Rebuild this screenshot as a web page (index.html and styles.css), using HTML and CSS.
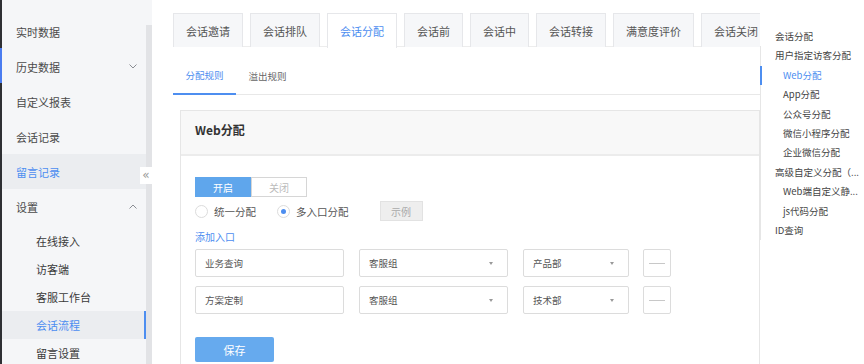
FILE: index.html
```html
<!DOCTYPE html>
<html lang="zh-CN">
<head>
  <meta charset="UTF-8">
  <meta name="viewport" content="width=device-width, initial-scale=1.0">
  <title>会话分配</title>
  <link rel="stylesheet" href="styles.css">
</head>
<body>
  <div class="layout">
    <div class="edge"><span class="edge-mark"></span></div>

    <aside class="sidebar">
      <ul class="menu">
        <li class="menu-item">实时数据</li>
        <li class="menu-item">历史数据
          <svg class="chev" width="8" height="5" viewBox="0 0 8 5"><polyline points="0.5,0.5 4,4 7.5,0.5" fill="none" stroke="#8a8d93" stroke-width="1"/></svg>
        </li>
        <li class="menu-item">自定义报表</li>
        <li class="menu-item">会话记录</li>
        <li class="menu-item active">留言记录</li>
        <li class="menu-item">设置
          <svg class="chev" width="8" height="5" viewBox="0 0 8 5"><polyline points="0.5,4.5 4,1 7.5,4.5" fill="none" stroke="#8a8d93" stroke-width="1"/></svg>
        </li>
        <li class="submenu">
          <ul>
            <li class="sub-item">在线接入</li>
            <li class="sub-item">访客端</li>
            <li class="sub-item">客服工作台</li>
            <li class="sub-item current">会话流程</li>
            <li class="sub-item">留言设置</li>
          </ul>
        </li>
      </ul>
      <div class="scroll"><div class="thumb"></div></div>
      <button class="collapse">«</button>
    </aside>

    <main class="main">
      <div class="content">
        <div class="tabs">
          <div class="tab">会话邀请</div>
          <div class="tab">会话排队</div>
          <div class="tab active">会话分配</div>
          <div class="tab">会话前</div>
          <div class="tab">会话中</div>
          <div class="tab">会话转接</div>
          <div class="tab">满意度评价</div>
          <div class="tab">会话关闭</div>
        </div>

        <div class="subtabs">
          <div class="subtab active">分配规则</div>
          <div class="subtab">溢出规则</div>
        </div>

        <section class="card">
          <div class="card-head">Web分配</div>
          <div class="card-body">
            <div class="switch">
              <span class="switch-btn on">开启</span>
              <span class="switch-btn">关闭</span>
            </div>

            <div class="radios">
              <label class="radio"><span class="dot"></span>统一分配</label>
              <label class="radio checked"><span class="dot"></span>多入口分配</label>
              <span class="sample">示例</span>
            </div>

            <div class="add-link">添加入口</div>

            <div class="entry">
              <div class="field text">业务查询</div>
              <div class="field select">客服组<span class="caret"></span></div>
              <div class="field select short">产品部<span class="caret"></span></div>
              <div class="minus"><span></span></div>
            </div>
            <div class="entry">
              <div class="field text">方案定制</div>
              <div class="field select">客服组<span class="caret"></span></div>
              <div class="field select short">技术部<span class="caret"></span></div>
              <div class="minus"><span></span></div>
            </div>

            <button class="save">保存</button>
          </div>
        </section>
      </div>
    </main>

    <nav class="anchor">
      <div class="anchor-title">会话分配</div>
      <ul class="anchor-list">
        <li>用户指定访客分配</li>
        <li class="lv2 current">Web分配</li>
        <li class="lv2">App分配</li>
        <li class="lv2">公众号分配</li>
        <li class="lv2">微信小程序分配</li>
        <li class="lv2">企业微信分配</li>
        <li>高级自定义分配（...</li>
        <li class="lv2">Web端自定义静...</li>
        <li class="lv2">js代码分配</li>
        <li>ID查询</li>
      </ul>
    </nav>
  </div>
</body>
</html>
```

FILE: styles.css
```css
* {
  box-sizing: border-box;
}

body {
  margin: 0;
  width: 864px;
  height: 364px;
  overflow: hidden;
  background: #fff;
  color: #333;
  font-family: "Noto Sans CJK SC", "Noto Sans", sans-serif;
}

ul {
  list-style: none;
  margin: 0;
  padding: 0;
}

.layout {
  display: flex;
  height: 364px;
  position: relative;
}

/* dark strip on the far left */
.edge {
  width: 2px;
  flex-shrink: 0;
  background: #2e2f33;
}

.edge-mark {
  display: block;
  margin-top: 48px;
  height: 35px;
  background: #4a7cf0;
}

/* sidebar */
.sidebar {
  width: 150px;
  flex-shrink: 0;
  display: flex;
  position: relative;
  background: #f5f6f8;
}

.menu {
  width: 144px;
  padding-top: 14px;
}

.menu-item {
  height: 35px;
  display: flex;
  align-items: center;
  justify-content: space-between;
  padding: 0 9px 0 14px;
  font-size: 11px;
  color: #4a4a4a;
}

.menu-item.active {
  background: #ebedf0;
  color: #4d8ef0;
}

.submenu {
  padding-top: 3px;
}

.sub-item {
  height: 28px;
  display: flex;
  align-items: center;
  padding-left: 34px;
  font-size: 11px;
  color: #3a3a3a;
}

.sub-item.current {
  background: #ebedf0;
  color: #4d8ef0;
  border-right: 2px solid #4d8ef0;
}

.scroll {
  width: 6px;
  padding-top: 25px;
}

.thumb {
  height: 100%;
  background: #e2e3e6;
}

.collapse {
  position: absolute;
  left: 138px;
  top: 167px;
  width: 12px;
  height: 17px;
  padding: 0;
  border: none;
  background: #fff;
  color: #999;
  font-size: 12px;
  line-height: 17px;
  font-family: "DejaVu Sans", sans-serif;
}

/* main */
.main {
  flex: 1;
  padding: 13px 0 0 21px;
}

.content {
  width: 587px;
}

.tabs {
  display: flex;
  gap: 7px;
  height: 34px;
  border-bottom: 1px solid #ededed;
}

.tab {
  flex-shrink: 0;
  height: 34px;
  padding: 0 12px;
  display: flex;
  align-items: center;
  white-space: nowrap;
  font-size: 11px;
  color: #555;
  background: #f6f7f9;
  border: 1px solid #e6e7ea;
  border-bottom: none;
}

.tab.active {
  height: 35px;
  background: #fff;
  color: #4d8ef0;
}

.subtabs {
  display: flex;
  height: 48px;
  border-bottom: 1px solid #e8e8e8;
}

.subtab {
  width: 63px;
  display: flex;
  align-items: center;
  justify-content: center;
  padding-top: 10px;
  font-size: 9.5px;
  color: #666;
}

.subtab.active {
  color: #4d8ef0;
  border-bottom: 2px solid #4d8ef0;
  margin-bottom: -1px;
}

/* card */
.card {
  margin: 15px 0 0 7px;
  width: 580px;
  height: 260px;
  border: 1px solid #e6e6e6;
  border-bottom: none;
}

.card-head {
  height: 45px;
  display: flex;
  align-items: center;
  padding: 0 0 6px 14px;
  background: #f8f8f8;
  border-bottom: 2px solid #ececec;
  font-size: 12px;
  font-weight: bold;
  color: #333;
}

.card-body {
  padding: 21px 14px 0 14px;
}

.switch {
  display: flex;
}

.switch-btn {
  width: 56px;
  height: 20px;
  display: flex;
  align-items: center;
  justify-content: center;
  font-size: 10px;
  color: #bbb;
  border: 1px solid #d6d6d6;
}

.switch-btn.on {
  background: #5fa6ec;
  border-color: #5fa6ec;
  color: #fff;
}

.radios {
  display: flex;
  align-items: center;
  height: 22px;
  margin-top: 3px;
}

.radio {
  display: flex;
  align-items: center;
  gap: 6px;
  margin-right: 21px;
  font-size: 10.5px;
  color: #555;
}

.dot {
  width: 13px;
  height: 13px;
  border-radius: 50%;
  border: 1px solid #dcdcdc;
  background: #fff;
  display: flex;
  align-items: center;
  justify-content: center;
}

.radio.checked .dot::after {
  content: "";
  width: 5px;
  height: 5px;
  border-radius: 50%;
  background: #4d8ef0;
}

.sample {
  margin-left: 10px;
  width: 43px;
  height: 20px;
  display: flex;
  align-items: center;
  justify-content: center;
  background: #eee;
  border: 1px solid #e2e2e2;
  font-size: 10px;
  color: #aaa;
}

.add-link {
  margin-top: 7px;
  height: 16px;
  line-height: 16px;
  font-size: 10px;
  color: #4d8ef0;
}

.entry {
  display: flex;
  gap: 15px;
  margin-top: 4px;
}

.entry + .entry {
  margin-top: 9px;
}

.field {
  width: 149px;
  height: 28px;
  display: flex;
  align-items: center;
  justify-content: space-between;
  padding: 0 14px 0 9px;
  border: 1px solid #dcdcdc;
  border-radius: 2px;
  font-size: 9.5px;
  color: #555;
}

.field.short {
  width: 106px;
}

.caret {
  width: 0;
  height: 0;
  border-left: 2.5px solid transparent;
  border-right: 2.5px solid transparent;
  border-top: 3px solid #999;
}

.minus {
  width: 28px;
  height: 28px;
  margin-left: -1px;
  display: flex;
  align-items: center;
  justify-content: center;
  border: 1px solid #dcdcdc;
  border-radius: 2px;
}

.minus span {
  width: 16px;
  height: 1px;
  background: #c8c8c8;
}

.save {
  margin-top: 23px;
  width: 79px;
  height: 25px;
  border: none;
  border-radius: 2px;
  background: #66aaee;
  color: #fff;
  font-size: 11px;
  font-family: inherit;
}

/* right anchor nav, floats over the page */
.anchor {
  position: absolute;
  left: 760px;
  top: 0;
  width: 104px;
  height: 364px;
  background: #fff;
  padding-top: 27px;
}

.anchor-title,
.anchor-list li {
  height: 19.4px;
  line-height: 19.4px;
  padding-left: 15px;
  font-size: 9.5px;
  color: #444;
  white-space: nowrap;
  overflow: hidden;
}

.anchor-list {
  border-left: 1px solid #e6e6e6;
}

.anchor-list li {
  padding-left: 14px;
}

.anchor-list li.lv2 {
  padding-left: 22px;
}

.anchor-list li.current {
  color: #4d8ef0;
  box-shadow: inset 2px 0 0 #4d8ef0;
  margin-left: -1px;
  padding-left: 23px;
}
```
